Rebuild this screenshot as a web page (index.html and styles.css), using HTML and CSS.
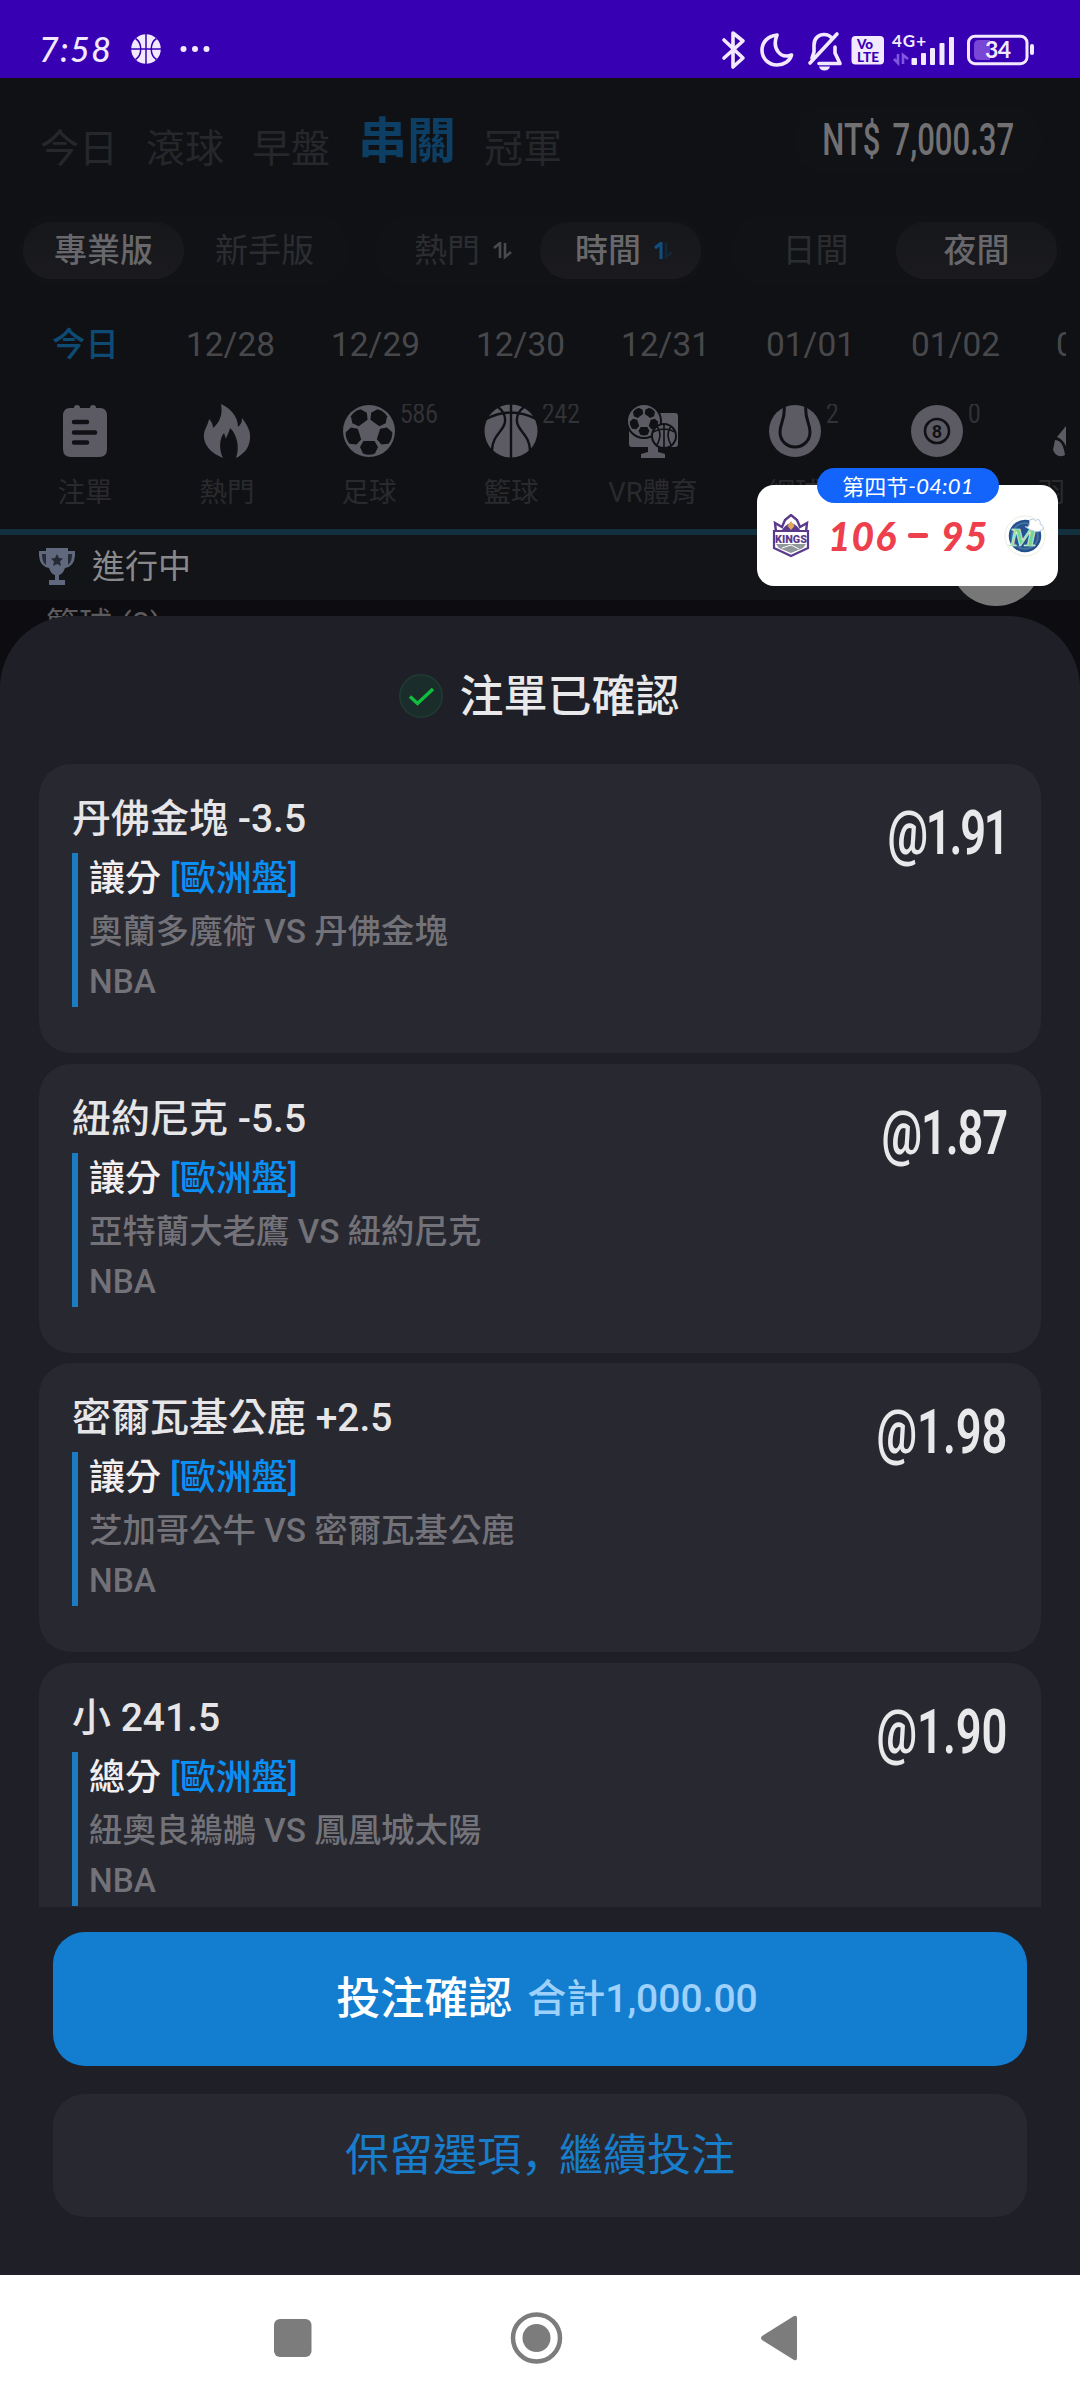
FILE: index.html
```html
<!DOCTYPE html>
<html lang="zh-Hant">
<head>
<meta charset="utf-8">
<title>注單已確認</title>
<link rel="stylesheet" href="styles.css">
</head>
<body>
<header class="status">
  <span class="clock">7:58</span>
  <svg class="status-ball" viewBox="0 0 30 30"><circle cx="15" cy="15" r="14.8" fill="#f3e9ff"/><path d="M15 0v30M0 15h30M4.500 4.500C11.500 9 11.500 21 4.500 25.500M25.500 4.500C18.500 9 18.500 21 25.500 25.500" fill="none" stroke="#3700b3" stroke-width="1.500"/></svg>
  <svg class="status-dots" viewBox="0 0 30 8"><g fill="#f3e9ff"><circle cx="3.500" cy="4" r="3"/><circle cx="15" cy="4" r="3"/><circle cx="26.500" cy="4" r="3"/></g></svg>
  <svg class="status-icons" viewBox="716 26 324 44">
    <g fill="none" stroke="#f3e9ff" stroke-width="3.600" stroke-linejoin="round" stroke-linecap="round">
      <path d="M724 39l19 18-10 9V32l10 8-19 17"/>
      <path d="M777 34c-9 1-15 7-15 15 0 9 7 15 15 15 7 0 13-4 14.500-10-11 4-20-6-14.500-20z"/>
      <path d="M812 57h0l2-6v-7c0-7 5-10.500 10-10.500 3 0 6 1 8 4M835 46v6l5 10.500h-21M810 62l27-29"/>
    </g>
    <path d="M819 65.500h11q-1 4-5.500 4t-5.500-4z" fill="#f3e9ff"/>
    <rect x="851.500" y="35" width="32.500" height="28.500" rx="4" fill="#f3e9ff"/>
    <text x="857" y="48" class="volte" textLength="16">Vo</text>
    <text x="857" y="61" class="volte" textLength="22">LTE</text>
    <text x="892" y="45.500" class="net" textLength="34">4G+</text>
    <path d="M894 58l4 4V53M903 63V54l5 4" fill="none" stroke="#8257e0" stroke-width="2.600"/>
    <g fill="#f3e9ff"><rect x="911.500" y="57" width="5.500" height="7" rx="1"/><rect x="921" y="52" width="5" height="12" rx="1"/><rect x="930" y="47" width="5" height="17" rx="1"/><rect x="939.500" y="42" width="5" height="22" rx="1"/><rect x="949" y="36" width="5" height="28" rx="1"/></g>
    <rect x="968.500" y="35.200" width="58.500" height="27.500" rx="6.500" fill="none" stroke="#f3e9ff" stroke-width="3"/>
    <path d="M979 39h11v20h-11q-5 0-5-5V44q0-5 5-5z" fill="#7847d6"/>
    <rect x="1030" y="43" width="4" height="11" rx="2" fill="#f3e9ff"/>
    <text x="985" y="57" class="charge" textLength="26">34</text>
  </svg>
</header>

<main class="app">
  <section class="head">
    <nav class="tabs">
      <span class="tab">今日</span><span class="tab">滾球</span><span class="tab">早盤</span><span class="tab tab-on">串關</span><span class="tab">冠軍</span>
      <div class="balance"><span>NT$ 7,000.37</span></div>
    </nav>
    <div class="filters">
      <div class="group"><span class="pill pill-on">專業版</span><span class="pill">新手版</span></div>
      <div class="group"><span class="pill pill-sort">熱門<svg class="sort" viewBox="0 0 20 18"><path d="M1 6l6-5v15M12 1v14l6-5" fill="none" stroke="#4a4a4e" stroke-width="2.600"/></svg></span><span class="pill pill-sort pill-on">時間<svg class="sort" viewBox="0 0 20 18"><path d="M1 6l6-5v16" fill="none" stroke="#0f4f80" stroke-width="3"/><path d="M12 1v14l6-5" fill="none" stroke="#12283a" stroke-width="2.400"/></svg></span></div>
      <div class="group"><span class="pill">日間</span><span class="pill pill-on">夜間</span></div>
    </div>
    <div class="dates">
      <span class="date date-on">今日</span><span class="date">12/28</span><span class="date">12/29</span><span class="date">12/30</span><span class="date">12/31</span><span class="date">01/01</span><span class="date">01/02</span><span class="date">01/03</span>
    </div>
    <div class="sports">
      <div class="sport"><svg viewBox="0 0 54 54"><path d="M12 4h4q0-3 3-3t3 3h10q0-3 3-3t3 3h4q7 0 7 8v33q0 8-8 8H13q-8 0-8-8V12q0-8 7-8z"/><path class="cut" d="M16 18h13M16 28.500h21M16 38.500h13" stroke-width="4.500" stroke-linecap="round"/></svg><span>注單</span></div>
      <div class="sport"><svg viewBox="0 0 54 54"><path d="M21 0c9 4 17 12 17 23 3-3 4-5 4-9 5 7 9 13 8 21-1 9-6 15-14 19 4-10 1-24-6-30-1 5-3 7-4 11l-2-6c-5 6-5 17-1 25C13 50 5 43 4 34c-1-8 4-12 5-19 3 3 4 6 4 9 7-6 10-14 8-24z"/></svg><span>熱門</span></div>
      <div class="sport"><svg viewBox="0 0 54 54"><circle cx="27" cy="27" r="26"/><g class="hole"><path id="patch" d="M21.500 37h11l3.500 6-3 6.500q-6 2.500-12 0L18 43z"/><use href="#patch" transform="rotate(72 27 27)"/><use href="#patch" transform="rotate(144 27 27)"/><use href="#patch" transform="rotate(216 27 27)"/><use href="#patch" transform="rotate(288 27 27)"/></g></svg><i class="count">586</i><span>足球</span></div>
      <div class="sport"><svg viewBox="0 0 54 54"><circle cx="27" cy="27" r="26.500"/><path class="cut" stroke-width="2.400" d="M27 0v54M2 15q25-13 50 0M14 3q8 6 7 15c-1 9-13 13-13 29M40 3q-8 6-7 15c1 9 13 13 13 29"/></svg><i class="count">242</i><span>籃球</span></div>
      <div class="sport"><svg viewBox="0 0 54 54"><path d="M24 9h25q3 0 3 3v28q0 3-3 3H32v5l7 2v4H15v-4l7-2v-5H6q-3 0-3-3V12z"/><circle class="ring" cx="18" cy="17" r="17"/><g class="hole" transform="translate(1.500 .5) scale(.61)"><use href="#patch"/><use href="#patch" transform="rotate(72 27 27)"/><use href="#patch" transform="rotate(144 27 27)"/><use href="#patch" transform="rotate(216 27 27)"/><use href="#patch" transform="rotate(288 27 27)"/></g><circle class="ring" cx="38" cy="32" r="12"/><path class="cut" stroke-width="1.600" d="M38 20v24M27 28q11-6 22 0M31 22q6 8 0 19M45 22q-6 8 0 19"/></svg><span>VR體育</span></div>
      <div class="sport"><svg viewBox="0 0 54 54"><circle cx="27" cy="27" r="26"/><path class="cut" stroke-width="3" d="M16 0c2 15-4 18-4 28 0 9 7 15 15 15s15-6 15-15c0-10-6-13-4-28"/></svg><i class="count">2</i><span>網球</span></div>
      <div class="sport"><svg viewBox="0 0 54 54"><circle cx="27" cy="27" r="26"/><circle class="cut" cx="27" cy="27" r="12" fill="none" stroke-width="2.600"/><text x="27" y="33.500" class="eight">8</text></svg><i class="count">0</i><span>撞球</span></div>
      <div class="sport"><svg viewBox="0 0 54 54"><path d="M3 36q8 0 10 15-8 4-12-5zM5 33L28 5l20 14-32 30q-2-12-11-16z"/></svg><span>羽毛球</span></div>
    </div>
  </section>
  <section class="live">
    <svg class="cup" viewBox="0 0 36 38"><path d="M7 0h22v3h7q1 15-10 17-2 6-6 7v5h6v5H10v-5h6v-5q-4-1-6-7Q-1 18 0 3h7z"/><path class="cup-hole" d="M3 6h4v11Q3 14 3 6zM33 6h-4v11q4-3 4-11zM18 6l2 4 4 .5-3 3 1 4.500-4-2-4 2 1-4.500-3-3 4-.5z"/></svg>
    <span>進行中</span>
  </section>
  <p class="league">籃球 (8)</p>

  <section class="sheet">
    <h1><svg viewBox="0 0 44 44"><circle cx="22" cy="22" r="21.200" fill="#1b2d2b" stroke="#1d3d32" stroke-width="1.500"/><path d="M11 22.500l7.500 7L34 15" fill="none" stroke="#0fbf3b" stroke-width="3.400"/></svg>注單已確認</h1>
    <div class="slips">
      <article class="slip"><div><h2>丹佛金塊 -3.5</h2><div class="detail"><p class="market">讓分 <b>[歐洲盤]</b></p><p class="match">奧蘭多魔術 VS 丹佛金塊</p><p class="cup-name">NBA</p></div></div><strong class="tightest">@1.91</strong></article>
      <article class="slip"><div><h2>紐約尼克 -5.5</h2><div class="detail"><p class="market">讓分 <b>[歐洲盤]</b></p><p class="match">亞特蘭大老鷹 VS 紐約尼克</p><p class="cup-name">NBA</p></div></div><strong class="tight">@1.87</strong></article>
      <article class="slip"><div><h2>密爾瓦基公鹿 +2.5</h2><div class="detail"><p class="market">讓分 <b>[歐洲盤]</b></p><p class="match">芝加哥公牛 VS 密爾瓦基公鹿</p><p class="cup-name">NBA</p></div></div><strong>@1.98</strong></article>
      <article class="slip"><div><h2>小 241.5</h2><div class="detail"><p class="market">總分 <b>[歐洲盤]</b></p><p class="match">紐奧良鵜鶘 VS 鳳凰城太陽</p><p class="cup-name">NBA</p></div></div><strong>@1.90</strong></article>
    </div>
    <div class="actions">
      <button class="confirm">投注確認<small>合計1,000.00</small></button>
      <button class="keep">保留選項<span lang="zh-Hans" class="comma">，</span>繼續投注</button>
    </div>
  </section>
</main>

<footer class="sysnav">
  <svg viewBox="0 0 1080 126"><g fill="#7c7c7c"><rect x="274" y="44" width="37.500" height="38" rx="6"/><circle cx="536.500" cy="63" r="14"/><path d="M762 61l32-20q3-1 3 2v40q0 3-3 2l-32-20q-2-2 0-4z"/></g><circle cx="536.500" cy="63" r="23.500" fill="none" stroke="#7c7c7c" stroke-width="4.500"/></svg>
</footer>

<span class="bubble"></span>
<aside class="score">
  <span class="period">第四节<em>-04:01</em></span>
  <svg class="team" viewBox="0 0 42 44"><path d="M6 18l-1-9 7 4 3-7 6-5 6 5 3 7 7-4-1 9z" fill="#fff" stroke="#5b3a8e" stroke-width="2.400"/><path d="M4 17h34v17L21 42 4 34z" fill="#fff" stroke="#5b3a8e" stroke-width="2.200"/><path d="M11 18q3-7 10-9 7 2 10 9z" fill="#5b3a8e"/><path d="M21 7l3.500 5-3.500 4-3.500-4z" fill="#e0a95d"/><path d="M6 30h30l-3 4-12 5-12-5z" fill="#90989c"/><path d="M12 34l9-3 8 4" fill="none" stroke="#fff"/><text x="5" y="28.500" class="kings" textLength="32" lengthAdjust="spacingAndGlyphs">KINGS</text></svg>
  <strong>106</strong><b class="dash"></b><strong>95</strong>
  <svg class="team" viewBox="0 0 44 44"><circle cx="22" cy="22" r="21" fill="#fff" stroke="#e9ecdc"/><circle cx="22" cy="22" r="17" fill="#23528e"/><circle cx="22" cy="22" r="13.500" fill="none" stroke="#48739e" stroke-width="2"/><text x="5" y="32" class="mavs" textLength="30" lengthAdjust="spacingAndGlyphs">M</text><path d="M22 12q5 3 5-7 4-2 6 1 5-4 5 4 4 1 3 5-7 6-19-3z" fill="#fff" stroke="#b9cadb"/></svg>
</aside>
</body>
</html>
```
FILE: styles.css
```css
* { box-sizing: border-box; margin: 0; padding: 0; }
body {
  position: relative;
  display: flex;
  flex-direction: column;
  width: 1080px;
  height: 2401px;
  overflow: hidden;
  background: #0d0d11;
  font-family: Roboto, "Noto Sans CJK TC", sans-serif;
}
svg { display: block; flex: none; }

/* system status bar */
.status {
  display: flex;
  align-items: center;
  height: 78px;
  padding: 20px 40px 0 39px;
  background: #3700b3;
  color: #f3e9ff;
}
.clock { width: 92px; font: italic 500 34px/40px Lato, sans-serif; letter-spacing: 1.400px; }
.status-ball { width: 30px; height: 30px; }
.status-dots { width: 30px; height: 8px; margin-left: 19px; }
.status-icons { width: 324px; height: 44px; margin: -1px 0 0 auto; }
.volte { font: 900 13.500px Lato, sans-serif; fill: #3700b3; }
.net { font: 700 17px Lato, sans-serif; fill: #f3e9ff; }
.charge { font: 700 23px Lato, sans-serif; fill: #f3e9ff; }

/* dimmed page */
.app { position: relative; flex: 1; min-height: 0; overflow: hidden; }
.head { height: 457px; background: #101115; border-bottom: 6px solid #12303d; }
.tabs { display: flex; gap: 28px; height: 137px; padding-left: 40px; }
.tab { margin-top: 51px; font-size: 39px; line-height: 40px; color: #26272a; }
.tab-on { margin-top: 44px; font-size: 49px; font-weight: 700; color: #0d3e63; }
.balance {
  display: flex;
  justify-content: center;
  align-items: center;
  width: 250px;
  height: 68px;
  margin: 28px 37px 0 auto;
  border-radius: 34px;
  background: #111216;
}
.balance span { font-size: 43.500px; font-weight: 500; color: #717173; word-spacing: 6px; transform: scaleX(.715); white-space: nowrap; }
.filters { display: flex; justify-content: space-between; height: 71px; padding: 0 18px; }
.group { display: flex; align-items: center; padding: 0 5px; border-radius: 36px; background: #111216; }
.pill {
  display: flex;
  justify-content: center;
  align-items: center;
  width: 161px;
  height: 57px;
  border-radius: 29px;
  font-size: 33px;
  line-height: 40px;
  color: #2c2d30;
}
.pill-sort { padding-left: 8px; }
.pill-on { background: linear-gradient(#16171b, #1b1b1f); color: #68686c; font-weight: 500; }
.sort { width: 20px; height: 18px; margin-left: 13px; }
.dates { display: flex; align-items: center; width: 1066px; height: 118px; padding-left: 13px; overflow: hidden; }
.date { flex: none; width: 145px; text-align: center; font-size: 33.400px; line-height: 40px; color: #48484b; }
.date-on { color: #0d4a74; font-weight: 500; }
.sports { display: flex; width: 1066px; height: 122px; padding-left: 14px; overflow: hidden; }
.sport { position: relative; flex: none; display: flex; flex-direction: column; align-items: center; gap: 20px; width: 142px; font-size: 27.500px; line-height: 30px; color: #2a2a2d; white-space: nowrap; }
.sport svg { width: 54px; height: 54px; fill: #5c5b64; }
.cut { fill: none; stroke: #101115; }
.hole { fill: #101115; }
.ring { stroke: #101115; stroke-width: 2; }
.eight { fill: #101115; font: 700 18px Roboto, sans-serif; text-anchor: middle; }
.count { position: absolute; left: 102px; top: -5px; font-style: normal; font-size: 28px; color: #323237; transform: scaleX(.8); transform-origin: 0 0; }
.live { display: flex; align-items: center; gap: 17px; height: 65px; padding: 0 0 2px 39px; background: #131417; font-size: 33px; line-height: 40px; color: #8a8a8c; }
.cup { width: 36px; height: 38px; fill: #60687d; }
.cup-hole { fill: #262a35; }
.league { padding-left: 46px; font-size: 33px; line-height: 50px; color: #5b5b5e; }

/* confirmation sheet */
.sheet {
  position: absolute;
  inset: 538px 0 0;
  display: flex;
  flex-direction: column;
  border-radius: 72px 72px 0 0;
  background: #1f1f28;
}
h1 { display: flex; justify-content: center; align-items: center; gap: 17px; height: 148px; padding: 56px 2px 42px 0; font-size: 44px; font-weight: 500; line-height: 60px; color: #e9e9eb; }
h1 svg { width: 44px; height: 44px; margin-top: -2px; }
.slips { display: flex; flex-direction: column; gap: 10.600px; height: 1143px; margin: 0 39px; overflow: hidden; }
.slip { flex: none; display: flex; justify-content: space-between; height: 289px; padding: 32px 34px 0 33px; border-radius: 32px; background: #282830; }
h2 { font-size: 39px; font-weight: 500; line-height: 46px; color: #e6e6e8; }
.detail { height: 154px; margin-top: 11px; padding-left: 11px; border-left: 6px solid #1b7cc2; font-weight: 500; }
.market { font-size: 36px; line-height: 53px; color: #f0f0f2; }
.market b { font-weight: 500; color: #0a8ff5; }
.match { font-size: 33.400px; line-height: 52px; color: #727278; }
.cup-name { font-size: 33.400px; line-height: 48px; color: #727278; }
.slip strong { margin-top: 7px; font-size: 62px; font-weight: 600; line-height: 60px; color: #e9e9eb; transform: scaleX(.73); transform-origin: 100% 0; }
.slip .tight { letter-spacing: -1.500px; }
.slip .tightest { letter-spacing: -3px; }
.actions { display: flex; flex-direction: column; gap: 28px; padding: 25px 53px 0; }
button { display: flex; justify-content: center; align-items: center; border: 0; border-radius: 32px; font-family: inherit; font-size: 44px; }
.confirm { height: 134px; padding: 0 0 8px 14px; gap: 15px; background: #137ed0; color: #fff; font-weight: 500; }
.confirm small { font-size: 39px; color: #9dd1fb; }
.keep { height: 123px; padding-bottom: 8px; background: #282830; color: #187dcb; }
.comma { width: 38px; font-family: "Noto Sans CJK SC", sans-serif; }

/* system navigation */
.sysnav { height: 126px; background: #fff; }

/* floating live score */
.bubble { position: absolute; left: 950px; top: 514px; width: 92px; height: 92px; border-radius: 50%; background: #777; }
.score {
  position: absolute;
  left: 757px;
  top: 485px;
  display: flex;
  align-items: center;
  width: 301px;
  height: 101px;
  padding: 0 12px 0 13px;
  border-radius: 17px;
  background: #fff;
}
.score strong { font: italic 900 39px/40px Lato, sans-serif; letter-spacing: 1px; color: #ee3f4c; }
.team { width: 42px; height: 44px; }
.team + strong { margin-left: 16px; }
.dash { width: 20px; height: 5px; margin: 0 13px 0 11px; background: #ee3f4c; border-radius: 2px; }
.score .team:last-child { margin-left: auto; }
.period {
  position: absolute;
  left: 60px;
  top: -17px;
  display: flex;
  justify-content: center;
  width: 182px;
  height: 35px;
  border-radius: 18px;
  background: #1264fb;
  font: 22px/35px "Noto Sans CJK SC", sans-serif;
  color: #fff;
}
.period em { font-family: Lato, sans-serif; font-size: 22px; letter-spacing: .2px; }
.kings { font: 900 10.500px Roboto, sans-serif; fill: #5b3a8e; }
.mavs { font: italic 900 27px "Liberation Serif", serif; fill: #72d693; stroke: #dff5e5; stroke-width: .7; }
```
